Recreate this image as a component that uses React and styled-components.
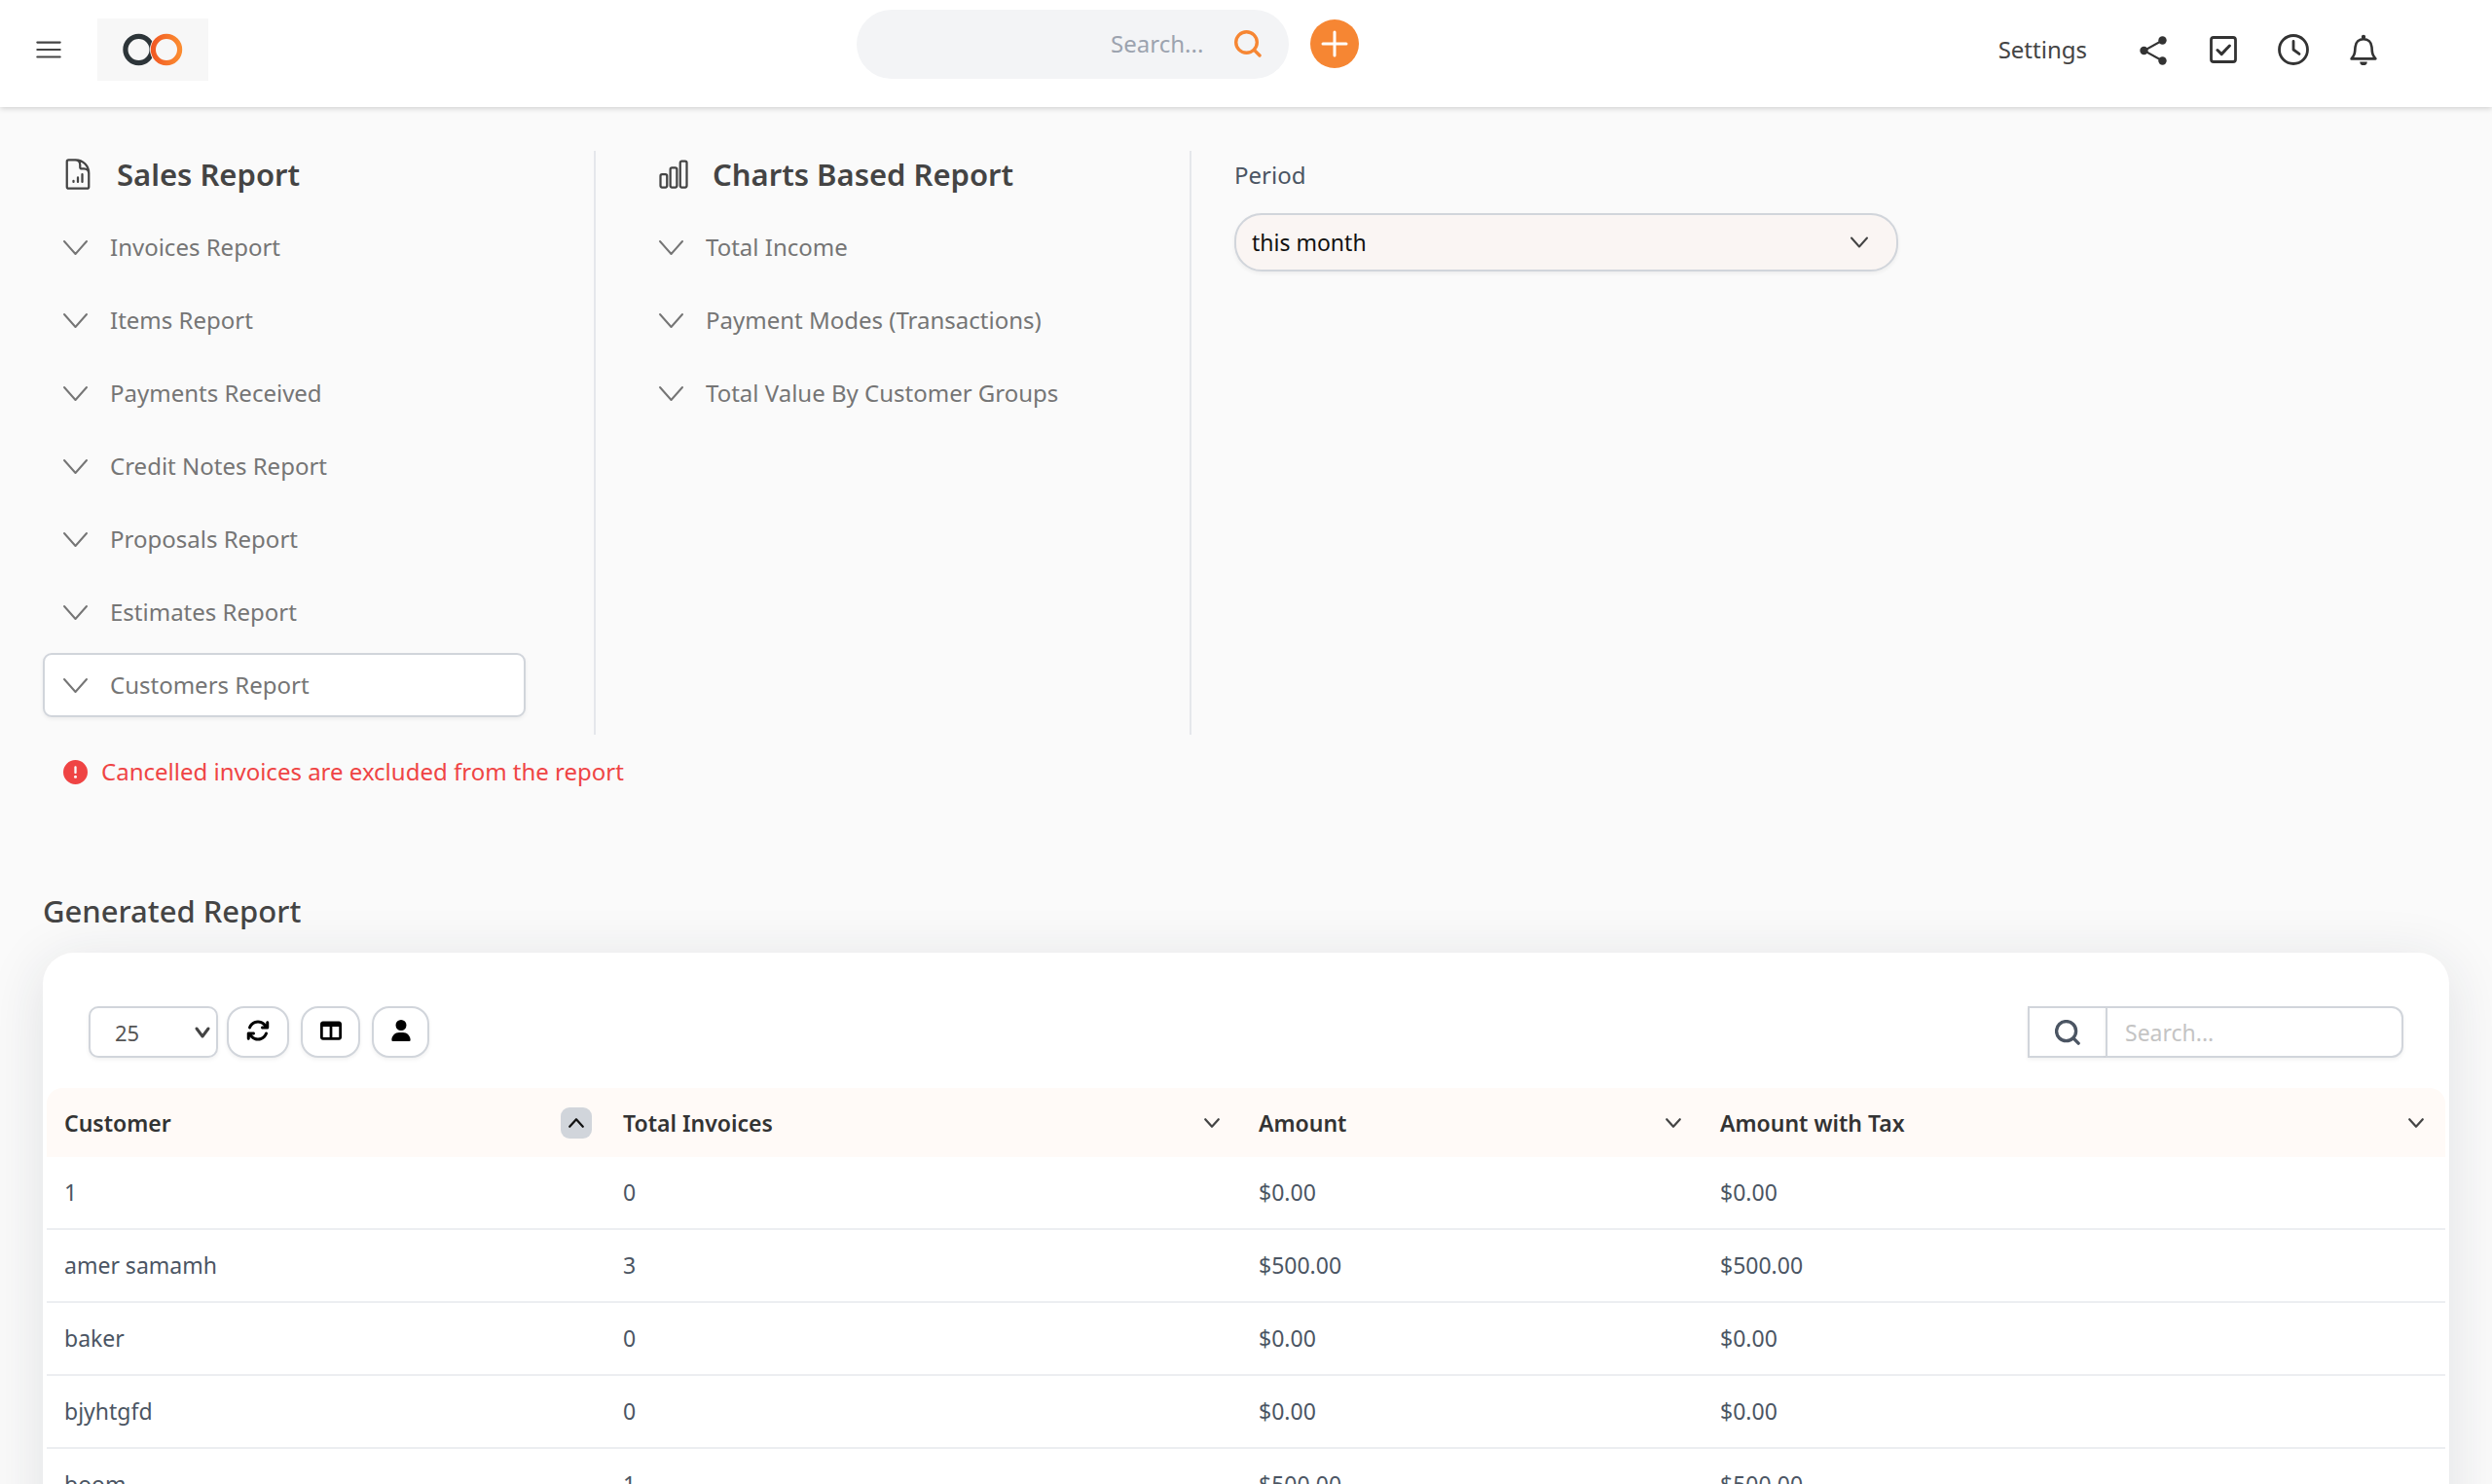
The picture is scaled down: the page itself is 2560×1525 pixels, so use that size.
import React, { useState } from 'react'
import styled, { createGlobalStyle } from 'styled-components';
import {
  HiOutlineBars3,
  HiOutlineDocumentChartBar,
  HiOutlineChartBar,
} from 'react-icons/hi2';
import { FaArrowsRotate, FaTableColumns, FaUser, FaCircleExclamation } from 'react-icons/fa6';

const SALES = [
  'Invoices Report',
  'Items Report',
  'Payments Received',
  'Credit Notes Report',
  'Proposals Report',
  'Estimates Report',
  'Customers Report',
];

const CHARTS = [
  'Total Income',
  'Payment Modes (Transactions)',
  'Total Value By Customer Groups',
];

const COLUMNS = [
  { label: 'Customer', width: 574 },
  { label: 'Total Invoices', width: 653 },
  { label: 'Amount', width: 474 },
  { label: 'Amount with Tax', width: 763 },
];
const TABLE_WIDTH = COLUMNS.reduce((sum, c) => sum + c.width, 0);

const ROWS = [
  ['1', '0', '$0.00', '$0.00'],
  ['amer samamh', '3', '$500.00', '$500.00'],
  ['baker', '0', '$0.00', '$0.00'],
  ['bjyhtgfd', '0', '$0.00', '$0.00'],
  ['boom', '1', '$500.00', '$500.00'],
];

const Chevron = ({ width, height, stroke = 2, up }) => (
  <svg width={width} height={height} viewBox={`0 0 ${width} ${height}`} fill="none" stroke="currentColor"
    strokeWidth={stroke} strokeLinecap="round" strokeLinejoin="round" aria-hidden="true">
    {up
      ? <path d={`M${stroke} ${height - stroke}L${width / 2} ${stroke}L${width - stroke} ${height - stroke}`} />
      : <path d={`M${stroke} ${stroke}L${width / 2} ${height - stroke}L${width - stroke} ${stroke}`} />}
  </svg>
)

const Logo = () => (
  <svg width="64" height="36" viewBox="0 0 64 36" fill="none" aria-hidden="true">
    <defs>
      <linearGradient id="ring" x1="0" y1="0" x2="1" y2="0">
        <stop offset="0" stopColor="#f15a24" />
        <stop offset="1" stopColor="#fb8b30" />
      </linearGradient>
    </defs>
    <circle cx="17.5" cy="18" r="13.6" stroke="#2d3539" strokeWidth="5.2" />
    <circle cx="46" cy="18" r="17" fill="#f7f7f7" />
    <circle cx="46" cy="18" r="13.6" stroke="url(#ring)" strokeWidth="5.2" />
  </svg>
)

const ShareIcon = () => (
  <svg width="32" height="32" viewBox="0 0 32 32" aria-hidden="true">
    <path d="M25.5 6.5L6.5 17L25.5 27.5" fill="none" stroke="#333" strokeWidth="2" />
    <circle cx="25.5" cy="6.5" r="4.2" fill="#333" />
    <circle cx="6.5" cy="17" r="4.2" fill="#333" />
    <circle cx="25.5" cy="27.5" r="4.2" fill="#333" />
  </svg>
)

const TaskIcon = () => (
  <svg width="32" height="32" viewBox="0 0 32 32" fill="none" stroke="#333" aria-hidden="true">
    <rect x="3.5" y="3.5" width="25" height="25" rx="2.5" strokeWidth="2.8" />
    <path d="M10 16.5L14.2 20.6L22.4 12" strokeWidth="3" strokeLinecap="round" strokeLinejoin="round" />
  </svg>
)

const ClockIcon = () => (
  <svg width="32" height="32" viewBox="0 0 32 32" fill="none" stroke="#333" aria-hidden="true">
    <circle cx="16" cy="16" r="14.5" strokeWidth="2.8" />
    <path d="M16 7.5V16L22 20.4" strokeWidth="2.8" strokeLinecap="round" strokeLinejoin="round" />
  </svg>
)

const BellIcon = () => (
  <svg width="32" height="32" viewBox="0 0 32 32" fill="none" aria-hidden="true">
    <path d="M3.6 25.4C7 21.6 7.2 19 7.5 13.4C7.9 8 11.6 5.2 16 5.2C20.4 5.2 24.1 8 24.5 13.4C24.8 19 25 21.6 28.4 25.4Z"
      stroke="#333" strokeWidth="2.6" strokeLinejoin="round" />
    <circle cx="16" cy="3" r="2.2" fill="#333" />
    <path d="M12.2 28.4H19.8A3.8 3.8 0 0 1 12.2 28.4Z" fill="#333" />
  </svg>
)

const SearchIcon = ({ size, stroke = 3 }) => (
  <svg width={size} height={size} viewBox="0 0 28 28" fill="none" stroke="currentColor" strokeWidth={stroke}
    strokeLinecap="round" aria-hidden="true">
    <circle cx="12.5" cy="12.5" r="10.8" />
    <path d="M20.4 20.4L26 26" />
  </svg>
)

function ReportList({ items, selected, onSelect }) {
  return (
    <List>
      {items.map((name) => (
        <li key={name}>
          <ReportItem type="button" $active={name === selected} onClick={() => onSelect(name)}>
            <Chevron width={27} height={17} />
            {name}
          </ReportItem>
        </li>
      ))}
    </List>
  )
}

function App() {
  const [report, setReport] = useState('Customers Report')
  const [sortBy, setSortBy] = useState('Customer')

  return (
    <Page>
      <GlobalStyle />
      <TopBar>
        <Brand>
          <PlainButton type="button" aria-label="Menu"><HiOutlineBars3 size={34} /></PlainButton>
          <LogoLink href="#" aria-label="Home"><Logo /></LogoLink>
        </Brand>
        <SearchArea>
          <TopSearch>
            <TopInput type="search" placeholder="Search..." aria-label="Search" />
            <SearchIcon size={28} stroke={3.4} />
          </TopSearch>
          <AddButton type="button" aria-label="Add">
            <svg width="28" height="28" viewBox="0 0 28 28" stroke="#fff" strokeWidth="3" strokeLinecap="round">
              <path d="M14 2V26M2 14H26" />
            </svg>
          </AddButton>
        </SearchArea>
        <Nav>
          <SettingsLink href="#">Settings</SettingsLink>
          <PlainButton type="button" aria-label="Share"><ShareIcon /></PlainButton>
          <PlainButton type="button" aria-label="Tasks"><TaskIcon /></PlainButton>
          <PlainButton type="button" aria-label="Timers"><ClockIcon /></PlainButton>
          <PlainButton type="button" aria-label="Notifications"><BellIcon /></PlainButton>
        </Nav>
      </TopBar>

      <Main>
        <Reports>
          <Column>
            <ColumnTitle><HiOutlineDocumentChartBar size={36} />Sales Report</ColumnTitle>
            <ReportList items={SALES} selected={report} onSelect={setReport} />
          </Column>
          <Column>
            <ColumnTitle><HiOutlineChartBar size={36} />Charts Based Report</ColumnTitle>
            <ReportList items={CHARTS} selected={report} onSelect={setReport} />
          </Column>
          <Period>
            <label htmlFor="period">Period</label>
            <SelectWrap>
              <PeriodSelect id="period" defaultValue="this month">
                <option>this month</option>
                <option>last month</option>
                <option>this year</option>
              </PeriodSelect>
              <SelectArrow $right={30}><Chevron width={20} height={13} /></SelectArrow>
            </SelectWrap>
          </Period>
        </Reports>

        <Notice><FaCircleExclamation size={25} />Cancelled invoices are excluded from the report</Notice>

        <SectionTitle>Generated Report</SectionTitle>
        <Card>
          <Toolbar>
            <SelectWrap>
              <SizeSelect defaultValue="25" aria-label="Rows per page">
                <option>25</option>
                <option>50</option>
                <option>100</option>
              </SizeSelect>
              <SelectArrow $right={7}><Chevron width={18} height={14} stroke={3} /></SelectArrow>
            </SelectWrap>
            <ToolGroup>
              <ToolButton type="button" $width={64} aria-label="Reload"><FaArrowsRotate size={24} /></ToolButton>
              <ToolButton type="button" $width={61} aria-label="Columns"><FaTableColumns size={22} /></ToolButton>
              <ToolButton type="button" $width={59} aria-label="Customers"><FaUser size={22} /></ToolButton>
            </ToolGroup>
            <TableSearch>
              <SearchButton type="button" aria-label="Search table"><SearchIcon size={26} stroke={3.6} /></SearchButton>
              <TableInput type="search" placeholder="Search..." aria-label="Search table text" />
            </TableSearch>
          </Toolbar>
          <Table>
            <colgroup>
              {COLUMNS.map((c) => <col key={c.label} style={{ width: `${(c.width / TABLE_WIDTH) * 100}%` }} />)}
            </colgroup>
            <thead>
              <tr>
                {COLUMNS.map((c) => {
                  const active = c.label === sortBy
                  return (
                    <th key={c.label} scope="col">
                      <HeadCell>
                        {c.label}
                        <SortButton type="button" $active={active} aria-label={`Sort by ${c.label}`}
                          onClick={() => setSortBy(c.label)}>
                          <Chevron width={18} height={12} stroke={2.2} up={active} />
                        </SortButton>
                      </HeadCell>
                    </th>
                  )
                })}
              </tr>
            </thead>
            <tbody>
              {ROWS.map((row) => (
                <tr key={row[0]}>
                  {row.map((value, i) => <td key={i}>{value}</td>)}
                </tr>
              ))}
            </tbody>
          </Table>
        </Card>
      </Main>
    </Page>
  )
}

const GlobalStyle = createGlobalStyle`
  * {
    box-sizing: border-box;
  }
  body {
    margin: 0;
    background-color: #fafafa;
    font-family: "Noto Sans", "Open Sans", sans-serif;
    font-size: 24px;
    line-height: 32px;
    color: #4b5563;
  }
  button, input, select {
    font: inherit;
    margin: 0;
  }
  input::-webkit-search-cancel-button {
    display: none;
  }
  svg {
    display: block;
    flex: none;
  }
`;
const Page = styled.div`
  height: 100vh;
  overflow: hidden auto;
  scrollbar-width: none;
`;
const TopBar = styled.header`
  display: flex;
  align-items: center;
  justify-content: space-between;
  height: 110px;
  padding: 0 116px 8px 33px;
  background-color: #fff;
  box-shadow: 0 1px 6px rgba(0, 0, 0, 0.2);
`;
const Brand = styled.div`
  display: flex;
  align-items: center;
  gap: 33px;
  padding-right: 10px;
`;
const PlainButton = styled.button`
  padding: 0;
  border: 0;
  background: none;
  color: #444;
  cursor: pointer;
`;
const LogoLink = styled.a`
  display: flex;
  align-items: center;
  justify-content: center;
  width: 114px;
  height: 64px;
  background-color: #f7f7f7;
`;
const SearchArea = styled.div`
  display: flex;
  align-items: center;
  gap: 22px;
  padding-bottom: 12px;
`;
const TopSearch = styled.div`
  display: flex;
  align-items: center;
  gap: 30px;
  width: 444px;
  height: 71px;
  padding: 0 28px;
  border-radius: 36px;
  background-color: #f3f4f6;
  color: #f68633;
`;
const TopInput = styled.input`
  flex: 1;
  min-width: 0;
  border: 0;
  outline: 0;
  background: none;
  text-align: right;
  &::placeholder {
    color: #9ca3af;
    opacity: 1;
  }
`;
const AddButton = styled.button`
  display: flex;
  align-items: center;
  justify-content: center;
  width: 50px;
  height: 50px;
  padding: 0;
  border: 0;
  border-radius: 50%;
  background-color: #f68633;
`;
const Nav = styled.nav`
  display: flex;
  align-items: center;
  gap: 40px;
`;
const SettingsLink = styled.a`
  margin-right: 12px;
  color: #444;
  text-decoration: none;
`;
const Main = styled.main`
  padding: 45px 44px 0;
`;
const Reports = styled.section`
  display: grid;
  grid-template-columns: 568fr 568fr 1248fr;
  gap: 44px;
`;
const Column = styled.div`
  padding: 0 70px 18px 0;
  border-right: 2px solid #e5e7eb;
`;
const ColumnTitle = styled.h2`
  display: flex;
  align-items: center;
  gap: 22px;
  height: 48px;
  margin: 0 0 18px;
  padding-left: 18px;
  font-size: 31px;
  font-weight: 600;
  color: #444;
  white-space: nowrap;
`;
const List = styled.ul`
  display: flex;
  flex-direction: column;
  gap: 9px;
  margin: 0;
  padding: 0;
  list-style: none;
`;
const ReportItem = styled.button`
  display: flex;
  align-items: center;
  gap: 22px;
  width: 100%;
  height: 66px;
  padding: 0 18px;
  border: 2px solid ${(p) => (p.$active ? '#d1d5db' : 'transparent')};
  border-radius: 9px;
  background-color: ${(p) => (p.$active ? '#fff' : 'transparent')};
  box-shadow: ${(p) => (p.$active ? '0 2px 4px rgba(0, 0, 0, 0.06)' : 'none')};
  color: #757575;
  text-align: left;
  white-space: nowrap;
`;
const Period = styled.div`
  display: flex;
  flex-direction: column;
  gap: 23px;
  max-width: 682px;
  padding-top: 9px;
`;
const SelectWrap = styled.div`
  position: relative;
`;
const SelectArrow = styled.span`
  position: absolute;
  top: 50%;
  right: ${(p) => p.$right}px;
  transform: translateY(-50%);
  color: #444;
  pointer-events: none;
`;
const PeriodSelect = styled.select`
  appearance: none;
  width: 100%;
  height: 60px;
  padding: 0 16px;
  border: 2px solid #d1d5db;
  border-radius: 28px;
  background-color: #faf5f3;
  box-shadow: 0 2px 4px rgba(0, 0, 0, 0.06);
  font-size: 23px;
  color: #111;
`;
const Notice = styled.p`
  display: flex;
  align-items: center;
  gap: 14px;
  margin: 22px 0 0;
  padding-left: 21px;
  color: #ef4444;
`;
const SectionTitle = styled.h1`
  margin: 106px 0 22px;
  font-size: 31px;
  line-height: 42px;
  font-weight: 500;
  color: #444;
`;
const Card = styled.section`
  padding: 55px 4px 40px;
  border-radius: 32px;
  background-color: #fff;
  box-shadow: 0 10px 60px rgba(30, 41, 59, 0.12);
`;
const Toolbar = styled.div`
  display: flex;
  align-items: center;
  gap: 9px;
  padding: 0 43px 31px;
`;
const SizeSelect = styled.select`
  appearance: none;
  display: block;
  width: 133px;
  height: 53px;
  padding: 0 25px;
  border: 2px solid #d1d5db;
  border-radius: 10px;
  background-color: #fff;
  box-shadow: 0 2px 4px rgba(0, 0, 0, 0.06);
  font-size: 22px;
  color: #555;
`;
const ToolGroup = styled.div`
  display: flex;
  gap: 12px;
`;
const ToolButton = styled.button`
  display: flex;
  justify-content: center;
  align-items: center;
  width: ${(p) => p.$width}px;
  height: 53px;
  padding: 0 0 4px;
  border: 2px solid #d1d5db;
  border-radius: 18px;
  background-color: #fff;
  box-shadow: 0 2px 4px rgba(0, 0, 0, 0.06);
  color: #000;
`;
const TableSearch = styled.div`
  display: flex;
  width: 386px;
  height: 53px;
  margin-left: auto;
`;
const SearchButton = styled.button`
  display: flex;
  align-items: center;
  justify-content: center;
  width: 80px;
  padding: 0;
  border: 2px solid #d1d5db;
  border-right: 0;
  background-color: #fff;
  box-shadow: 0 2px 4px rgba(0, 0, 0, 0.06);
  color: #4b5563;
`;
const TableInput = styled.input`
  flex: 1;
  min-width: 0;
  padding: 0 18px;
  border: 2px solid #d1d5db;
  border-radius: 0 12px 12px 0;
  outline: 0;
  background-color: #fff;
  box-shadow: 0 2px 4px rgba(0, 0, 0, 0.06);
  font-size: 23px;
  &::placeholder {
    color: #c4c4c4;
    opacity: 1;
  }
`;
const Table = styled.table`
  width: 100%;
  table-layout: fixed;
  border-collapse: separate;
  border-spacing: 0;
  font-size: 23px;
  th {
    height: 71px;
    padding: 0 14px 0 18px;
    background-color: #fffaf7;
    color: #333;
    font-weight: 600;
    text-align: left;
  }
  th:first-child {
    border-top-left-radius: 16px;
  }
  th:last-child {
    border-top-right-radius: 16px;
  }
  td {
    height: 75px;
    padding: 0 18px 2px;
    border-bottom: 2px solid #eceef1;
  }
`;
const HeadCell = styled.div`
  display: flex;
  align-items: center;
  justify-content: space-between;
`;
const SortButton = styled.button`
  display: flex;
  align-items: center;
  justify-content: center;
  width: 32px;
  height: 32px;
  padding: 0;
  border: 0;
  border-radius: 9px;
  background-color: ${(p) => (p.$active ? '#d1d5db' : 'transparent')};
  color: ${(p) => (p.$active ? '#111' : '#444')};
`;

export default App
